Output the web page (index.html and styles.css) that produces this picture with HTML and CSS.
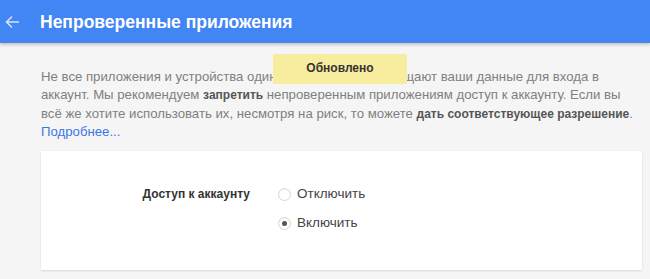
FILE: index.html
```html
<!DOCTYPE html>
<html lang="ru">
<head>
    <meta charset="UTF-8">
    <title>Непроверенные приложения</title>
    <link rel="stylesheet" href="styles.css">
</head>
<body>

    <div class="top-bar">
        <a class="back" href="#">
            <svg width="16" height="16" viewBox="0 0 16 16">
                <path d="M15 8H2.5M8 2.5L2.5 8L8 13.5" fill="none" stroke="currentColor" stroke-width="1.6"/>
            </svg>
        </a>
        <h1>Непроверенные приложения</h1>
    </div>

    <div class="toast">Обновлено</div>

    <div class="content">
        <p class="intro">
            Не все приложения и устройства одинаково надёжно защищают ваши данные для входа в<br>
            аккаунт. Мы рекомендуем <b>запретить</b> непроверенным приложениям доступ к аккаунту. Если вы<br>
            всё же хотите использовать их, несмотря на риск, то можете <b>дать соответствующее разрешение</b>.<br>
            <a href="#">Подробнее...</a>
        </p>

        <div class="card">
            <div class="card-label">Доступ к аккаунту</div>
            <div class="options">
                <label class="option"><span class="radio"></span>Отключить</label>
                <label class="option"><span class="radio checked"></span>Включить</label>
            </div>
        </div>
    </div>

</body>
</html>
```
FILE: styles.css
```css
body {
    margin: 0;
    font-family: 'Liberation Sans', Arial, sans-serif;
    background: #f5f5f5;
    color: #333;
    height: 279px;
    overflow: hidden;
}

.top-bar {
    height: 43px;
    background: #4285f4;
    display: flex;
    align-items: center;
    box-shadow: 0 2px 3px rgba(0, 0, 0, 0.2);
}

.top-bar .back {
    color: #d4e3fc;
    display: flex;
    width: 16px;
    margin: 0 20px 0 4px;
}

.top-bar h1 {
    margin: 0;
    font-size: 17.5px;
    font-weight: bold;
    color: #fff;
    padding-top: 1px;
}

.toast {
    position: absolute;
    left: 273px;
    top: 54px;
    width: 134px;
    height: 30px;
    background: #f8ec9e;
    color: #333;
    font-size: 12px;
    font-weight: bold;
    text-align: center;
    line-height: 29px;
}

.content {
    padding: 25px 7px 0 41px;
}

.intro {
    margin: 0;
    width: 602px;
    font-size: 13.2px;
    line-height: 17.8px;
    color: #808080;
    white-space: nowrap;
}

.intro b {
    color: #555;
    font-size: 12px;
}

.intro a {
    color: #3b78e7;
    text-decoration: none;
}

.card {
    margin-top: 10px;
    width: 601px;
    height: 119px;
    box-sizing: border-box;
    background: #fff;
    box-shadow: 0 1px 2px rgba(0, 0, 0, 0.12);
    display: grid;
    grid-template-columns: 237px 1fr;
    padding-top: 33px;
}

.card-label {
    text-align: right;
    font-size: 12px;
    font-weight: bold;
    color: #333;
    padding-right: 28px;
    line-height: 20px;
}

.options {
    display: flex;
    flex-direction: column;
    gap: 9px;
}

.option {
    display: flex;
    align-items: center;
    font-size: 13.5px;
    color: #444;
    line-height: 20px;
}

.radio {
    width: 11px;
    height: 11px;
    border: 1px solid #d6d6d6;
    border-radius: 50%;
    margin-right: 6px;
    position: relative;
    box-shadow: inset 0 1px 1px rgba(0, 0, 0, 0.05);
}

.radio.checked::after {
    content: '';
    position: absolute;
    left: 3px;
    top: 3px;
    width: 5px;
    height: 5px;
    border-radius: 50%;
    background: #555;
}
```
